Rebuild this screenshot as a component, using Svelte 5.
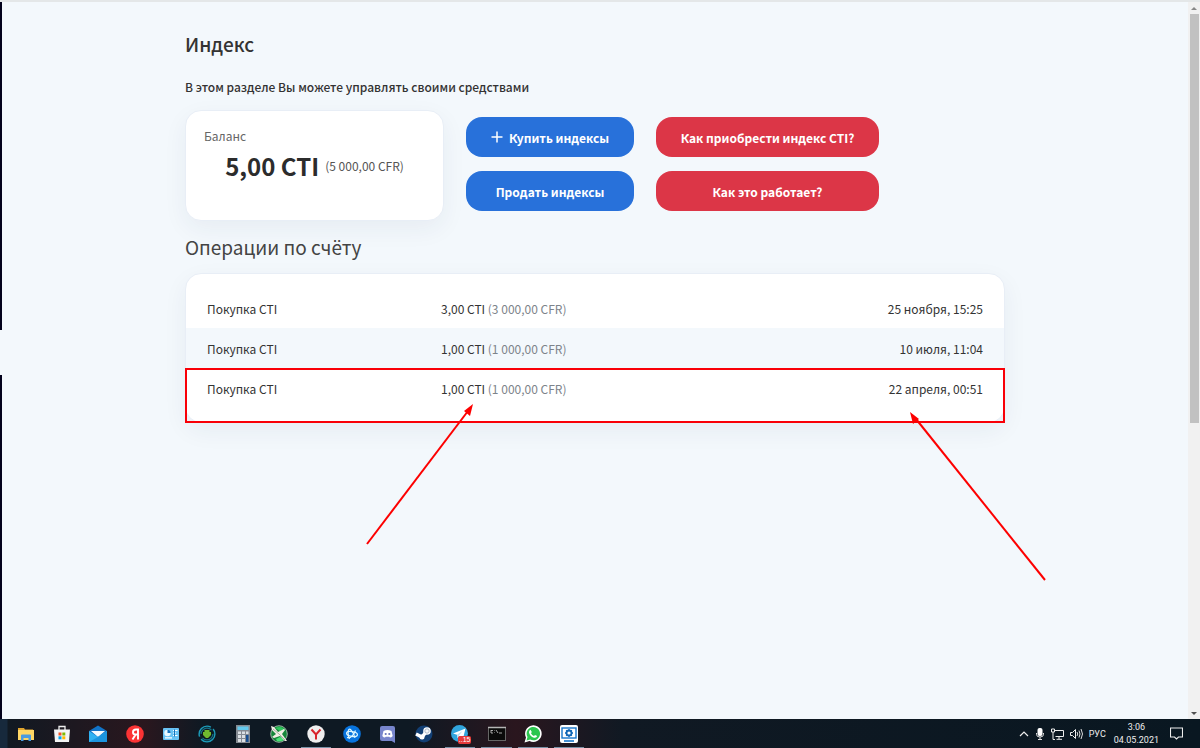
<script>
	const operations = [
		{ name: 'Покупка CTI', amount: '3,00 CTI', value: '(3 000,00 CFR)', date: '25 ноября, 15:25' },
		{ name: 'Покупка CTI', amount: '1,00 CTI', value: '(1 000,00 CFR)', date: '10 июля, 11:04' },
		{ name: 'Покупка CTI', amount: '1,00 CTI', value: '(1 000,00 CFR)', date: '22 апреля, 00:51' }
	];

	const apps = [
		{ id: 'explorer', title: 'Проводник' },
		{ id: 'store', title: 'Microsoft Store' },
		{ id: 'mail', title: 'Почта' },
		{ id: 'yandex', title: 'Яндекс' },
		{ id: 'panel', title: 'Панель управления' },
		{ id: 'download', title: 'Загрузчик' },
		{ id: 'calc', title: 'Калькулятор' },
		{ id: 'plane', title: 'Симулятор' },
		{ id: 'browser', title: 'Яндекс.Браузер', open: true },
		{ id: 'battlenet', title: 'Battle.net' },
		{ id: 'discord', title: 'Discord' },
		{ id: 'steam', title: 'Steam' },
		{ id: 'telegram', title: 'Telegram', open: true },
		{ id: 'terminal', title: 'Командная строка', open: true },
		{ id: 'whatsapp', title: 'WhatsApp', open: true },
		{ id: 'settings', title: 'Настройки', open: true }
	];
</script>

<div class="desktop">
	<div class="window">
		<div class="edge">
			<span class="dark"></span>
			<span class="gap"></span>
			<span class="dark rest"></span>
		</div>

		<main>
			<div class="content">
				<h1>Индекс</h1>
				<p class="intro">В этом разделе Вы можете управлять своими средствами</p>

				<div class="summary">
					<section class="card balance">
						<p class="label">Баланс</p>
						<p class="total"><strong>5,00 CTI</strong> <span>(5 000,00 CFR)</span></p>
					</section>
					<div class="actions">
						<button class="buy">
							<svg width="12" height="12" viewBox="0 0 12 12"><path d="M6 0.5V11.5M0.5 6H11.5" stroke="#fff" stroke-width="1.5" /></svg>
							Купить индексы
						</button>
						<button class="help">Как приобрести индекс CTI?</button>
						<button class="buy">Продать индексы</button>
						<button class="help">Как это работает?</button>
					</div>
				</div>

				<h2>Операции по счёту</h2>
				<section class="card operations">
					<table>
						<tbody>
							{#each operations as op}
								<tr>
									<td class="name">{op.name}</td>
									<td>{op.amount} <span class="muted">{op.value}</span></td>
									<td class="date">{op.date}</td>
								</tr>
							{/each}
						</tbody>
					</table>
					<div class="marker"></div>
					<svg class="arrow left" width="108" height="142" viewBox="0 0 108 142">
						<path d="M1 140L102 7" stroke="#fd0000" stroke-width="2" />
						<path d="M107 0L98 7L104 12Z" fill="#fd0000" />
					</svg>
					<svg class="arrow right" width="136" height="170" viewBox="0 0 136 170">
						<path d="M135 168L6 7" stroke="#fd0000" stroke-width="2" />
						<path d="M0 0L3 12L9 7Z" fill="#fd0000" />
					</svg>
				</section>
			</div>
		</main>

		<div class="scrollbar">
			<svg width="12" height="12" viewBox="0 0 12 12"><path d="M3 8L6 5L9 8Z" fill="#888" /></svg>
			<span class="thumb"></span>
			<svg width="12" height="12" viewBox="0 0 12 12"><path d="M3 5H9L6 8Z" fill="#505050" /></svg>
		</div>
	</div>

	<footer>
		<nav>
			{#each apps as app}
				<button class="app" class:open={app.open} aria-label={app.title}>
					<svg width="18" height="18" viewBox="0 0 18 18">
						{#if app.id === 'explorer'}
							<path d="M1 3H7L8 4.5H16V7H1Z" fill="#e0a52e" />
							<path d="M1 5H17V15H1Z" fill="#ffd765" />
							<path d="M4 16V10.5Q4 9.5 5 9.5H13Q14 9.5 14 10.5V16H11.5V13H6.5V16Z" fill="#4b9be0" />
						{:else if app.id === 'store'}
							<path d="M6 5V1.5H12V5" fill="none" stroke="#eee" stroke-width="1.3" />
							<path d="M1 4.5H17L16 17H2Z" fill="#f4f4f4" />
							<path d="M5.5 7.5H8.5V10.5H5.5Z" fill="#f25022" />
							<path d="M9.3 7.5H12.3V10.5H9.3Z" fill="#7fba00" />
							<path d="M5.5 11.3H8.5V14.3H5.5Z" fill="#00a4ef" />
							<path d="M9.3 11.3H12.3V14.3H9.3Z" fill="#ffb900" />
						{:else if app.id === 'mail'}
							<path d="M0 6L9 0.5L18 6V17H0Z" fill="#1173c7" />
							<path d="M2 6H16L9 12Z" fill="#f4fbff" />
							<path d="M0 6L9 12L18 6V17H0Z" fill="#2fb2f2" />
							<path d="M0 17L9 12L18 6V17Z" fill="#1b95df" />
						{:else if app.id === 'yandex'}
							<circle cx="9" cy="9" r="8.8" fill="#fb3334" />
							<path d="M12 3.5V14.5M12 4.5H10Q7 4.5 7 7.2Q7 9.5 9.5 9.5H12M9.7 9.5L6.5 14.5" fill="none" stroke="#fff" stroke-width="1.9" />
						{:else if app.id === 'panel'}
							<rect x="1" y="3" width="16" height="12" rx="1" fill="#68c2f4" />
							<circle cx="5.5" cy="8" r="3.2" fill="#e9f8ff" />
							<path d="M5.5 8V4.8A3.2 3.2 0 0 1 8.7 8Z" fill="#1673bd" />
							<path d="M11 5.5H15.5M11 8H14M11 10.5H15.5M3 12.8H10" stroke="#fff" stroke-width="1.2" />
							<path d="M12.5 4.5V11.5" stroke="#1673bd" />
						{:else if app.id === 'download'}
							<circle cx="9" cy="9" r="7.9" fill="#0a222c" stroke="#1d9dbb" stroke-width="1.4" stroke-dasharray="19 3" />
							<circle cx="9" cy="9" r="5.9" fill="#10191d" stroke="#157086" stroke-width="1.2" stroke-dasharray="14 4" />
							<path d="M6.5 5H11.5V7H13V10L10 13H8L5 10V7H6.5Z" fill="#70b92f" />
						{:else if app.id === 'calc'}
							<rect x="2" y="0" width="14" height="18" fill="#858b92" />
							<rect x="3.5" y="1.5" width="11" height="3.5" fill="#62c9ed" />
							<path d="M4 6.5H7V9H4ZM8 6.5H11V9H8ZM4 10H7V13H4ZM8 10H11V13H8ZM4 14H7V17H4ZM8 14H11V17H8ZM12 6.5H14.5V9H12Z" fill="#dbe0e4" />
							<path d="M12 10H14.5V17H12Z" fill="#174e91" />
						{:else if app.id === 'plane'}
							<circle cx="9" cy="9" r="8.3" fill="#17863a" stroke="#b9c6bd" stroke-width="0.8" />
							<path d="M5 3Q12 0 15 5L11 7L7 4Z" fill="#2fc65c" />
							<path d="M10 12L15 14Q12 17 7 16L6 14Z" fill="#4ce176" />
							<path d="M1 1L4 2L8 7L14 4L15 5L12 9L17 16L15 16L10 11L4 13L2 12L6 9L2 5Z" fill="#f1eee4" />
							<path d="M3 4L9 9L15 15" fill="none" stroke="#8c918b" stroke-width="0.7" />
						{:else if app.id === 'browser'}
							<circle cx="9" cy="9" r="8.7" fill="#eee" />
							<path d="M4.5 4.5L9 9.5L13.5 4.5M9 9.5V14.5" fill="none" stroke="#d8232a" stroke-width="2" />
						{:else if app.id === 'battlenet'}
							<circle cx="9" cy="9" r="8.8" fill="#0874de" />
							<g fill="none" stroke="#dff8ff" stroke-width="1.2">
								<ellipse cx="9" cy="9" rx="5.5" ry="2.4" transform="rotate(10 9 9)" />
								<path d="M6.5 14C4 10 5 2 7.5 4.5Q11 8 12 13" />
								<path d="M4 12.5Q9 14 12.5 5.5" />
							</g>
						{:else if app.id === 'discord'}
							<rect x="1" y="1" width="15" height="15" rx="2" fill="#7785cc" />
							<path d="M11 15L16 18V12Z" fill="#7785cc" />
							<path d="M4.5 6Q8.5 4 12.5 6L13.7 11Q12.5 12.5 11 12.5L10.3 11.7H6.7L6 12.5Q4.5 12.5 3.3 11Z" fill="#fff" />
							<circle cx="6.7" cy="9" r="1.1" fill="#6573bb" />
							<circle cx="10.3" cy="9" r="1.1" fill="#6573bb" />
						{:else if app.id === 'steam'}
							<circle cx="9" cy="9" r="8.5" fill="#123f74" />
							<path d="M1 9L7 12L11 7" fill="none" stroke="#fff" stroke-width="3.5" />
							<circle cx="12" cy="6" r="3.8" fill="#fff" />
							<circle cx="12" cy="6" r="2.2" fill="#f4f6f8" stroke="#8fa1b4" stroke-width="0.7" />
							<circle cx="7" cy="12" r="2.5" fill="#fff" />
						{:else if app.id === 'telegram'}
							<circle cx="8.5" cy="8.5" r="8.5" fill="#31a5dd" />
							<path d="M2 8.5L14.5 3.5L12 13.5L8.5 11L6.5 13L6 9.8Z" fill="#fff" />
							<path d="M6 9.8L11.5 6L8 10.5L6.5 13Z" fill="#b9dff2" />
						{:else if app.id === 'terminal'}
							<rect x="0.5" y="2.5" width="17" height="13" fill="#0a0a0a" stroke="#666" />
							<path d="M0 2.5H18" stroke="#b5b5b5" stroke-width="1.5" />
							<path d="M3 5.5H5M3 5V8H5M6.5 5.5V6M6.5 7V7.5M8 5L10 8M11 8H14" stroke="#ccc" stroke-width="0.8" fill="none" />
						{:else if app.id === 'whatsapp'}
							<path d="M0.5 17.5L2 12.5A8.3 8.3 0 1 1 5.5 16Z" fill="#fff" />
							<path d="M2.5 15.5L3.5 12A6.7 6.7 0 1 1 6.2 14.6Z" fill="#2cc64f" />
							<path d="M6.5 4.8L7.8 7L7 8.2Q8 10.2 10 11L11 9.9L13.2 11Q12.5 13.3 10 12.7Q5.8 11.5 5 7.5Q4.8 5.5 6.5 4.8Z" fill="#fff" />
						{:else}
							<rect width="18" height="18" rx="2" fill="#fff" />
							<rect x="2" y="3" width="14" height="10" fill="none" stroke="#1876ca" stroke-width="1.4" />
							<path d="M4 16H14" stroke="#1876ca" stroke-width="1.6" />
							<circle cx="9" cy="8" r="2.5" fill="none" stroke="#1267b6" stroke-width="1.8" />
							<path d="M9 4V5.5M9 10.5V12M5 8H6.5M11.5 8H13M6.2 5.2L7.2 6.2M11.8 5.2L10.8 6.2M6.2 10.8L7.2 9.8M11.8 10.8L10.8 9.8" stroke="#1267b6" stroke-width="1.3" />
						{/if}
					</svg>
					{#if app.id === 'telegram'}
						<span class="badge">..15</span>
					{/if}
				</button>
			{/each}
		</nav>

		<div class="tray">
			<svg width="10" height="12" viewBox="0 0 10 12"><path d="M1 8L5 4L9 8" fill="none" stroke="#eee" stroke-width="1.2" /></svg>
			<svg width="10" height="12" viewBox="0 0 10 12">
				<rect x="2.5" y="0" width="5" height="8" rx="2" fill="#fff" />
				<path d="M1.5 5V6.5Q1.5 9 5 9T8.5 6.5V5M5 9V11M3 11.5H7" fill="none" stroke="#ddd" />
			</svg>
			<svg width="13" height="12" viewBox="0 0 13 12">
				<path d="M4 2.5H12.5V8.5H4.5M8 8.5V11M5.5 11.3H11M0.5 1H3.5V4H0.5ZM2 4V11.5H4" fill="none" stroke="#eee" />
			</svg>
			<svg width="13" height="12" viewBox="0 0 13 12">
				<path d="M0.5 4.5H2.5L5.5 1.5V10.5L2.5 7.5H0.5Z" fill="none" stroke="#eee" />
				<path d="M7 4Q8.5 6 7 8M9 2.5Q11 6 9 9.5M11 1Q14 6 11 11" fill="none" stroke="#ddd" />
			</svg>
			<span class="lang">РУС</span>
			<time><span>3:06</span><span>04.05.2021</span></time>
			<svg class="notice" width="13" height="13" viewBox="0 0 13 13"><path d="M0.5 1H12.5V10H8.5L6.5 12L4.5 10H0.5Z" fill="none" stroke="#eee" stroke-width="1.1" /></svg>
		</div>
	</footer>
</div>

<style>
	:global(body) {
		margin: 0;
		background: #f3f8fc;
	}

	.desktop {
		display: flex;
		flex-direction: column;
		height: 100vh;
		overflow: hidden;
		font-family: "Noto Sans CJK SC", "Noto Sans", sans-serif;
		color: #333;
	}

	h1, h2, p {
		margin: 0;
	}

	.window {
		display: flex;
		flex: 1;
		min-height: 0;
		box-sizing: border-box;
		border-top: 2px solid #e4e7e8;
		background: #f3f8fc;
	}

	.edge {
		display: flex;
		flex-direction: column;
		width: 2px;
	}

	.edge .dark {
		height: 328px;
		background: #03021c;
	}

	.edge .gap {
		height: 45px;
	}

	.edge .rest {
		flex: 1;
	}

	main {
		flex: 1;
		padding: 0 16px;
	}

	.content {
		max-width: 820px;
		margin: 0 auto;
		padding-top: 27px;
	}

	h1 {
		font-size: 19px;
		line-height: 30px;
		font-weight: 500;
	}

	.intro {
		margin-top: 18px;
		font-size: 12px;
		line-height: 20px;
		font-weight: 500;
	}

	.card {
		box-sizing: border-box;
		border: 1px solid #e8eef6;
		border-radius: 16px;
		background: #fff;
		box-shadow: 0 8px 24px rgba(30, 50, 90, 0.06);
	}

	.summary {
		display: flex;
		gap: 22px;
		margin-top: 13px;
	}

	.balance {
		width: 259px;
		height: 111px;
		padding: 15px 18px;
	}

	.label {
		font-size: 12px;
		line-height: 20px;
		color: #666;
	}

	.total {
		display: flex;
		align-items: center;
		justify-content: center;
		gap: 6px;
		line-height: 40px;
		font-size: 12px;
		color: #555;
	}

	.total strong {
		font-size: 24px;
		font-weight: 700;
		color: #2c2c2c;
	}

	.actions {
		display: grid;
		grid-template-columns: 168px 223px;
		grid-auto-rows: 40px;
		gap: 14px 22px;
		padding-top: 7px;
	}

	.actions button {
		display: flex;
		align-items: center;
		justify-content: center;
		gap: 6px;
		padding: 0;
		border: 0;
		border-radius: 16px;
		font-family: inherit;
		font-size: 12px;
		font-weight: 700;
		color: #fff;
		cursor: pointer;
	}

	.actions .buy {
		background: #2871da;
	}

	.actions .help {
		background: #dc3647;
	}

	h2 {
		margin-top: 11px;
		font-size: 19px;
		line-height: 30px;
		font-weight: 400;
		color: #444;
	}

	.operations {
		position: relative;
		margin-top: 11px;
		padding: 14px 0;
	}

	table {
		width: 100%;
		table-layout: fixed;
		border-collapse: collapse;
		font-size: 12px;
		line-height: 20px;
	}

	td {
		height: 40px;
		box-sizing: border-box;
		padding: 2px 21px 0;
		white-space: nowrap;
	}

	.name {
		width: 234px;
	}

	.date {
		text-align: right;
	}

	tr:nth-child(even) {
		background: #f3f8fc;
	}

	.muted {
		color: #7d838a;
	}

	.marker {
		position: absolute;
		left: -1px;
		right: -1px;
		bottom: -1px;
		height: 55px;
		box-sizing: border-box;
		border: 2px solid #f90007;
	}

	.arrow {
		position: absolute;
	}

	.arrow.left {
		left: 180px;
		top: 130px;
	}

	.arrow.right {
		right: -42px;
		top: 138px;
	}

	.scrollbar {
		display: flex;
		flex-direction: column;
		width: 12px;
		background: #f1f1f1;
	}

	.scrollbar svg {
		flex: none;
	}

	.scrollbar svg:last-child {
		margin-top: auto;
	}

	.thumb {
		width: 9px;
		height: 409px;
		margin-left: 2px;
		background: #c1c1c1;
	}

	footer {
		display: flex;
		justify-content: space-between;
		height: 29px;
		background: linear-gradient(90deg, #17293c 0, #17293c 7px, #111922 8px, #2a171e 12%, #0e1923 17%, #0e1923 34%, #2a161e 43%, #101923 52%, #091721);
		font-family: Roboto, "Open Sans", sans-serif;
		color: #eee;
	}

	nav {
		display: grid;
		grid-template-columns: repeat(16, 1fr);
		width: 579px;
		margin-left: 8px;
	}

	.app {
		position: relative;
		display: flex;
		align-items: center;
		justify-content: center;
		padding: 0;
		border: 0;
		background: none;
	}

	.app.open::after {
		content: "";
		position: absolute;
		left: 3px;
		right: 3px;
		bottom: 0;
		height: 1px;
		background: #7891a6;
	}

	.badge {
		position: absolute;
		right: 7px;
		bottom: 4px;
		padding: 0 1px;
		border-radius: 2px;
		background: #e6393b;
		font-size: 7px;
		line-height: 8px;
		color: #fff;
	}

	.tray {
		display: flex;
		align-items: center;
		gap: 6px;
		padding-right: 17px;
		font-size: 9px;
	}

	.tray time {
		display: flex;
		flex-direction: column;
		align-items: center;
		margin-left: 2px;
		line-height: 13px;
	}

	.notice {
		margin-left: 5px;
	}
</style>
